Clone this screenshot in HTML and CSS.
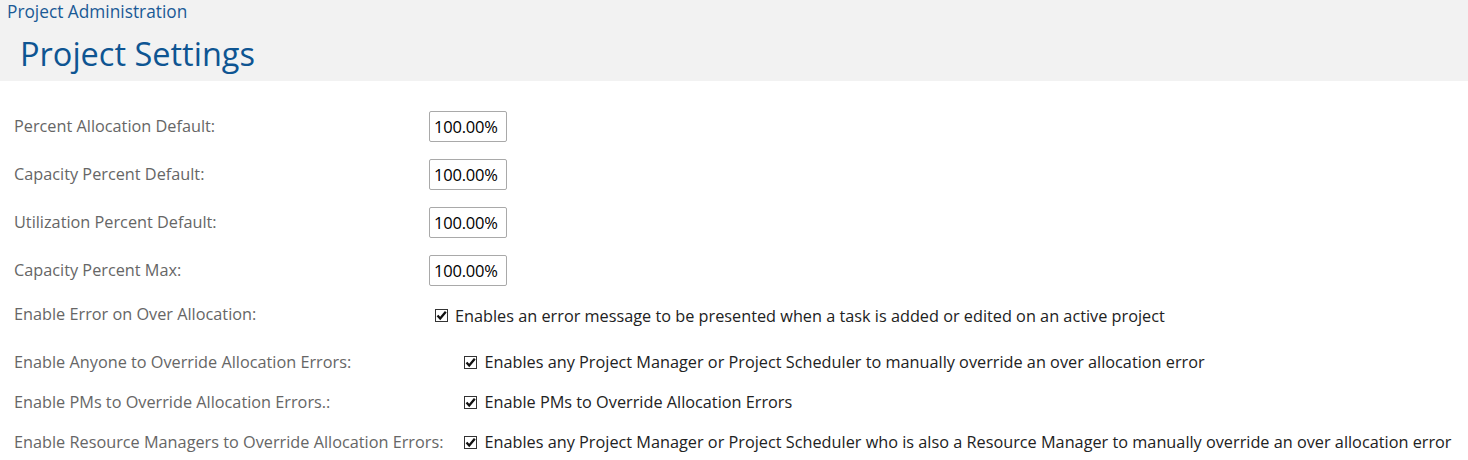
FILE: index.html
```html
<!DOCTYPE html>
<html>
<head>
<meta charset="utf-8">
<link rel="stylesheet" href="styles.css">
</head>
<body>
<header class="page-header">
  <div class="crumb">Project Administration</div>
  <h1 class="title">Project Settings</h1>
</header>
<main class="content">
  <table class="settings first">
    <tr>
      <td class="label">Percent Allocation Default:</td>
      <td class="field"><input class="pct" type="text" value="100.00%"></td>
    </tr>
    <tr>
      <td class="label">Capacity Percent Default:</td>
      <td class="field"><input class="pct" type="text" value="100.00%"></td>
    </tr>
    <tr>
      <td class="label">Utilization Percent Default:</td>
      <td class="field"><input class="pct" type="text" value="100.00%"></td>
    </tr>
    <tr>
      <td class="label">Capacity Percent Max:</td>
      <td class="field"><input class="pct" type="text" value="100.00%"></td>
    </tr>
    <tr class="check-row">
      <td class="label">Enable Error on Over Allocation:</td>
      <td class="field"><label class="check"><span class="box"><svg viewBox="0 0 13 13" width="13" height="13"><rect x="0.5" y="0.5" width="12" height="12" fill="#fff" stroke="#333"/><path d="M2.5 6.6 L5.2 9.6 L10.8 2.8" fill="none" stroke="#111" stroke-width="2.3"/></svg></span>Enables an error message to be presented when a task is added or edited on an active project</label></td>
    </tr>
  </table>
  <table class="settings second">
    <tr class="check-row">
      <td class="label">Enable Anyone to Override Allocation Errors:</td>
      <td class="field"><label class="check"><span class="box"><svg viewBox="0 0 13 13" width="13" height="13"><rect x="0.5" y="0.5" width="12" height="12" fill="#fff" stroke="#333"/><path d="M2.5 6.6 L5.2 9.6 L10.8 2.8" fill="none" stroke="#111" stroke-width="2.3"/></svg></span>Enables any Project Manager or Project Scheduler to manually override an over allocation error</label></td>
    </tr>
    <tr class="check-row">
      <td class="label">Enable PMs to Override Allocation Errors.:</td>
      <td class="field"><label class="check"><span class="box"><svg viewBox="0 0 13 13" width="13" height="13"><rect x="0.5" y="0.5" width="12" height="12" fill="#fff" stroke="#333"/><path d="M2.5 6.6 L5.2 9.6 L10.8 2.8" fill="none" stroke="#111" stroke-width="2.3"/></svg></span>Enable PMs to Override Allocation Errors</label></td>
    </tr>
    <tr class="check-row">
      <td class="label">Enable Resource Managers to Override Allocation Errors:</td>
      <td class="field"><label class="check"><span class="box"><svg viewBox="0 0 13 13" width="13" height="13"><rect x="0.5" y="0.5" width="12" height="12" fill="#fff" stroke="#333"/><path d="M2.5 6.6 L5.2 9.6 L10.8 2.8" fill="none" stroke="#111" stroke-width="2.3"/></svg></span>Enables any Project Manager or Project Scheduler who is also a Resource Manager to manually override an over allocation error</label></td>
    </tr>
  </table>
</main>
</body>
</html>
```

FILE: styles.css
```css
html, body {
  margin: 0;
  padding: 0;
  background: #fff;
  font-family: "Open Sans", "DejaVu Sans", sans-serif;
}

.page-header {
  background: #f2f2f2;
  height: 81px;
  box-sizing: border-box;
  padding: 0 0 0 7px;
}

.crumb {
  color: #1a5a96;
  font-size: 17.3px;
  line-height: 24px;
}

.title {
  margin: 0;
  padding: 10px 0 0 13px;
  color: #0e5592;
  font-size: 32.5px;
  font-weight: 400;
  line-height: 40px;
}

.content {
  padding: 21px 0 0 14px;
}

.settings {
  border-collapse: collapse;
  border-spacing: 0;
}

.settings td {
  padding: 0;
  vertical-align: middle;
}

.settings tr {
  height: 48px;
}

.settings tr.check-row {
  height: 40px;
}

.first .label {
  width: 415px;
}

.second {
  margin-top: 8px;
}

.second .label {
  padding-right: 15px;
}

.label {
  color: #666;
  font-size: 16.27px;
  white-space: nowrap;
}

.pct {
  width: 78px;
  height: 31px;
  box-sizing: border-box;
  border: 1px solid #a9a9a9;
  border-radius: 2px;
  padding: 0 4px;
  font-family: "Open Sans", sans-serif;
  font-size: 16.5px;
  letter-spacing: -0.2px;
  color: #000;
  background: #fff;
}

.check {
  display: flex;
  align-items: center;
  color: #222;
  font-size: 16.27px;
  white-space: nowrap;
}

.first .check {
  padding-top: 3px;
}

.box {
  display: inline-flex;
  margin: 0 7px 0 6px;
}
```
